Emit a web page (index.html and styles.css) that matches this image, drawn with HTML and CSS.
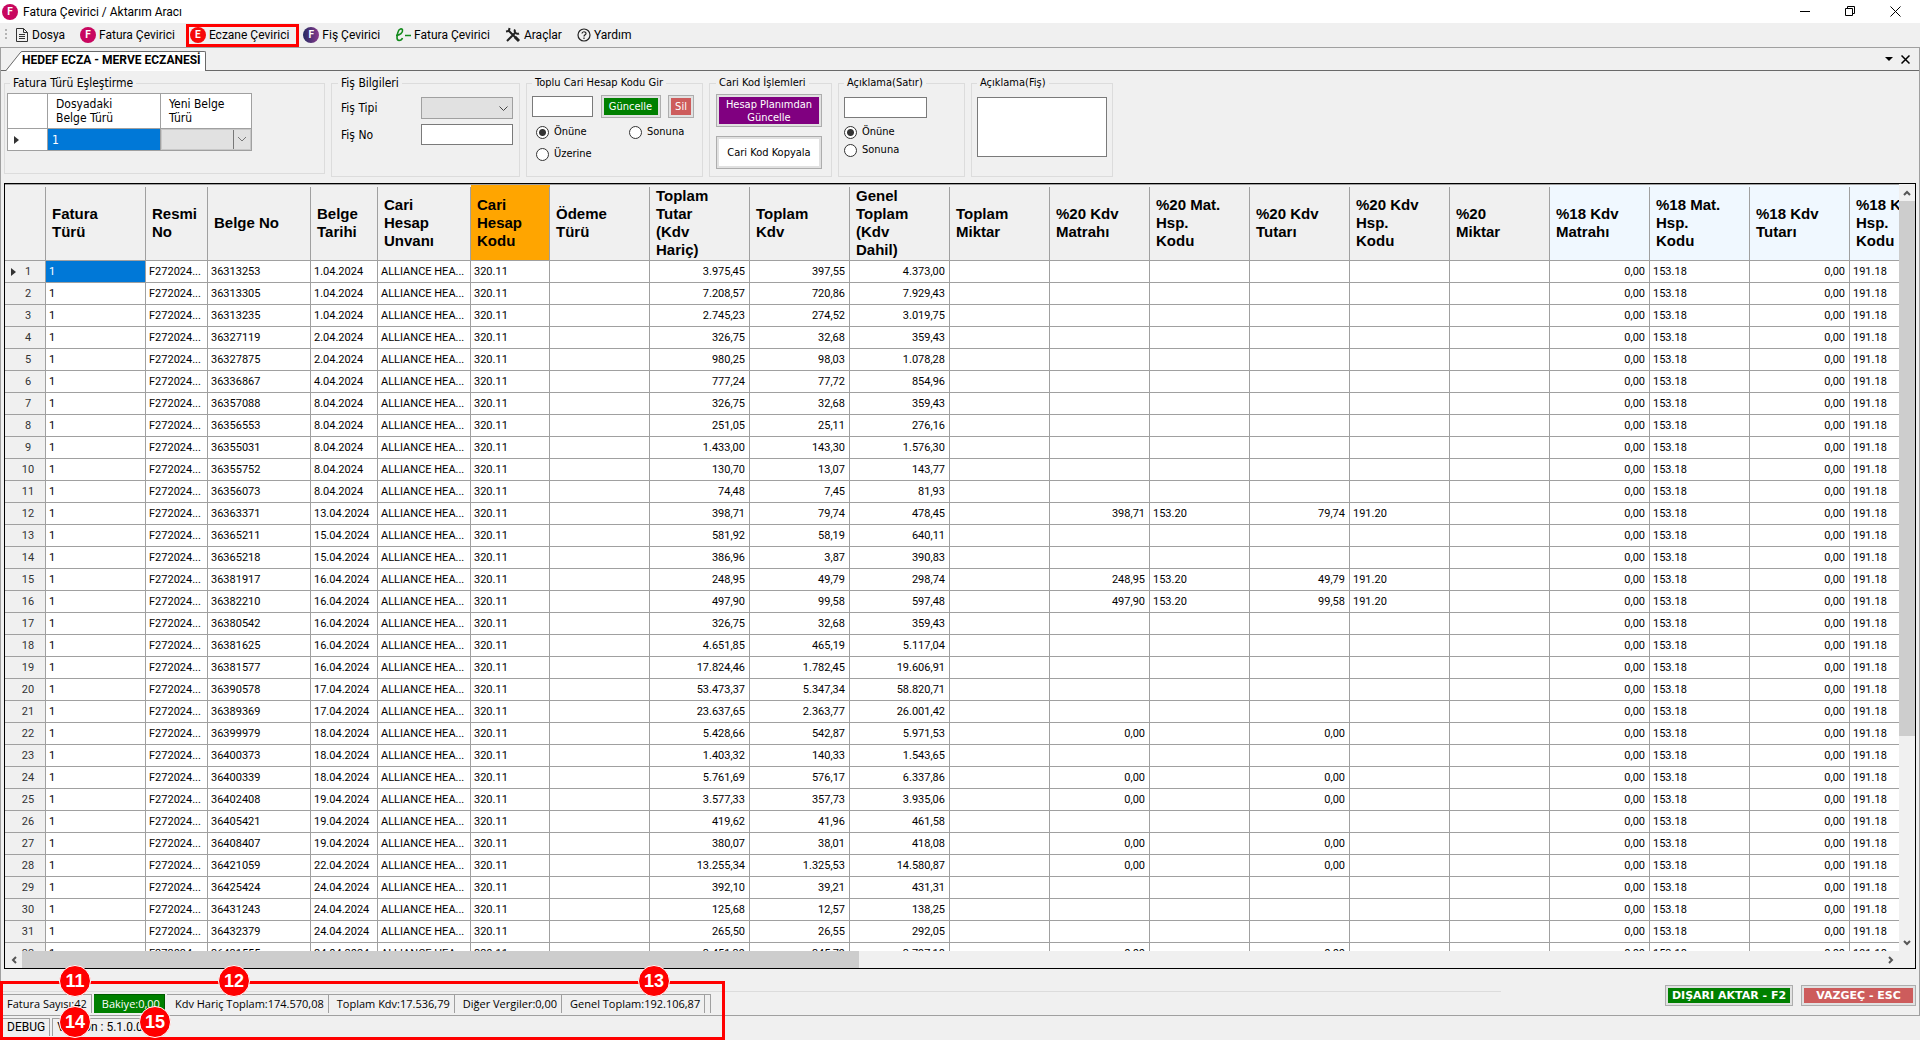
FILE: index.html
```html
<!DOCTYPE html>
<html lang="tr">

<head>
    <meta charset="UTF-8">
    <meta name="viewport" content="width=device-width, initial-scale=1.0">
    <title>Fatura Çevirici / Aktarım Aracı</title>
    <link rel="stylesheet" href="styles.css">
</head>

<body>
    <header class="titlebar">
        <span class="badge-icon pink">F</span>
        <span class="title">Fatura Çevirici / Aktarım Aracı</span>
        <div class="window-buttons">
            <button aria-label="Küçült"><svg width="11" height="11"><path d="M0 5.5h10" /></svg></button>
            <button aria-label="Geri yükle"><svg width="11" height="11"><path d="M.5 2.5h7v7h-7zM2.5 2.5v-2h7v7h-2" /></svg></button>
            <button aria-label="Kapat"><svg width="11" height="11"><path d="M.5.5l10 10M10.5.5l-10 10" /></svg></button>
        </div>
    </header>

    <nav class="menu">
        <span class="grip"></span>
        <button>
            <svg width="14" height="16" viewBox="0 0 14 16" fill="none" stroke="#333"><path d="M1.5 1.5h7l4 4v9h-11zM8.5 1.5v4h4M4 7.5h6M4 9.5h6M4 11.5h6" /></svg>
            Dosya
        </button>
        <button><span class="badge-icon pink">F</span>Fatura Çevirici</button>
        <button class="marked"><span class="badge-icon red">E</span>Eczane Çevirici</button>
        <button><span class="badge-icon navy">F</span>Fiş Çevirici</button>
        <button>
            <svg width="16" height="16" viewBox="0 0 16 16" fill="none" stroke="#138a1c" stroke-width="1.6"><path d="M1 8.500C5 8.500 8 5.500 7.500 3C7 1 4 1.500 3 5C1.500 9.500 1.500 13.500 4 13.500C5.500 13.500 7 12.500 7.500 11M10 8.500h6" /></svg>
            Fatura Çevirici
        </button>
        <button>
            <svg width="16" height="16" viewBox="0 0 16 16" fill="none" stroke="#222" stroke-width="2"><path d="M3 3l10 10M2 14l8-8" /><path d="M1 4.500l3-.5.5-3M10 2.500a3 3 0 0 0 4 4" /><path d="M10 10l4 4" stroke-width="3" /></svg>
            Araçlar
        </button>
        <button>
            <svg width="14" height="14" viewBox="0 0 14 14" fill="none" stroke="#222" stroke-width="1.2"><circle cx="7" cy="7" r="6" /><path d="M5 5.600C5 3.200 9 3.200 9 5.400C9 6.800 7 6.700 7 8.500M7 9.600v1.300" /></svg>
            Yardım
        </button>
    </nav>

    <main class="document">
        <div class="tabs">
            <div class="tab">
                <svg width="16" height="20" viewBox="0 0 16 20"><path d="M0 20L14 2Q15 .5 16 .5V20z" fill="#fff" /><path d="M0 19.500L14 2Q15 .5 16 .5" fill="none" stroke="#696969" /></svg>
                <span class="tab-label">HEDEF ECZA - MERVE ECZANESİ</span>
            </div>
            <div class="tab-buttons">
                <button aria-label="Sekmeler"><svg width="8" height="4"><path d="M0 0h8L4 4z" fill="#000" /></svg></button>
                <button aria-label="Sekmeyi kapat"><svg width="9" height="9"><path d="M.5.5l8 8M8.500.5l-8 8" stroke="#000" stroke-width="1.500" /></svg></button>
            </div>
        </div>

        <div class="groups">
            <fieldset class="group group-types">
                <legend>Fatura Türü Eşleştirme</legend>
                <table class="type-table">
                    <colgroup>
                        <col class="col-mark">
                        <col class="col-old">
                        <col class="col-new">
                    </colgroup>
                    <thead>
                        <tr>
                            <th></th>
                            <th>Dosyadaki<br>Belge Türü</th>
                            <th>Yeni Belge<br>Türü</th>
                        </tr>
                    </thead>
                    <tbody>
                        <tr>
                            <td><span class="arrow"></span></td>
                            <td class="selected">1</td>
                            <td><select aria-label="Yeni Belge Türü"></select></td>
                        </tr>
                    </tbody>
                </table>
            </fieldset>

            <fieldset class="group group-slip">
                <legend>Fiş Bilgileri</legend>
                <div class="field">
                    <label for="slipType">Fiş Tipi</label>
                    <select id="slipType"></select>
                </div>
                <div class="field">
                    <label for="slipNo">Fiş No</label>
                    <input type="text" id="slipNo">
                </div>
            </fieldset>

            <fieldset class="group group-bulk small">
                <legend>Toplu Cari Hesap Kodu Gir</legend>
                <div class="row">
                    <input type="text" aria-label="Cari Hesap Kodu">
                    <button class="btn green">Güncelle</button>
                    <button class="btn rose">Sil</button>
                </div>
                <div class="radios">
                    <label><input type="radio" name="bulk" checked>Önüne</label>
                    <label><input type="radio" name="bulk">Sonuna</label>
                    <label><input type="radio" name="bulk">Üzerine</label>
                </div>
            </fieldset>

            <fieldset class="group group-codes small">
                <legend>Cari Kod İşlemleri</legend>
                <button class="btn purple">Hesap Planımdan Güncelle</button>
                <button class="btn white">Cari Kod Kopyala</button>
            </fieldset>

            <fieldset class="group group-line small">
                <legend>Açıklama(Satır)</legend>
                <input type="text" aria-label="Açıklama(Satır)">
                <label><input type="radio" name="line" checked>Önüne</label>
                <label><input type="radio" name="line">Sonuna</label>
            </fieldset>

            <fieldset class="group group-note small">
                <legend>Açıklama(Fiş)</legend>
                <textarea aria-label="Açıklama(Fiş)"></textarea>
            </fieldset>
        </div>

        <div class="grid">
            <div class="grid-view">
                <table class="invoices">
                    <colgroup id="cols"></colgroup>
                    <thead>
                        <tr id="head"></tr>
                    </thead>
                    <tbody id="rows"></tbody>
                </table>
            </div>
            <div class="scroll scroll-y">
                <button aria-label="Yukarı"><svg width="8" height="6"><path d="M1 5l3-3 3 3" /></svg></button>
                <div class="track"><div class="thumb"></div></div>
                <button aria-label="Aşağı"><svg width="8" height="6"><path d="M1 1l3 3 3-3" /></svg></button>
            </div>
            <div class="scroll scroll-x">
                <button aria-label="Sola"><svg width="6" height="8"><path d="M5 1L2 4l3 3" /></svg></button>
                <div class="track"><div class="thumb"></div></div>
                <button aria-label="Sağa"><svg width="6" height="8"><path d="M1 1l3 3-3 3" /></svg></button>
            </div>
        </div>

        <div class="footer">
            <div class="totals">
                <span class="total">Fatura Sayısı:42</span>
                <span class="total balance">Bakiye:0,00</span>
                <span class="total">Kdv Hariç Toplam:174.570,08</span>
                <span class="total">Toplam Kdv:17.536,79</span>
                <span class="total">Diğer Vergiler:0,00</span>
                <span class="total">Genel Toplam:192.106,87</span>
                <span class="total empty"></span>
            </div>
            <div class="actions">
                <button class="btn green">DIŞARI AKTAR - F2</button>
                <button class="btn rose">VAZGEÇ - ESC</button>
            </div>
        </div>
    </main>

    <footer class="statusbar">
        <span>DEBUG</span>
        <span>Version : 5.1.0.0</span>
    </footer>

    <div class="callout">
        <span class="pin p11">11</span>
        <span class="pin p12">12</span>
        <span class="pin p13">13</span>
        <span class="pin p14">14</span>
        <span class="pin p15">15</span>
    </div>

    <script>
        // title, width, extra class, numeric
        const columns = [
            ['', 41, '', false],
            ['Fatura<br>Türü', 100, '', false],
            ['Resmi<br>No', 62, '', false],
            ['Belge No', 103, '', false],
            ['Belge<br>Tarihi', 67, '', false],
            ['Cari<br>Hesap<br>Unvanı', 93, '', false],
            ['Cari<br>Hesap<br>Kodu', 79, 'orange', false],
            ['Ödeme<br>Türü', 100, '', false],
            ['Toplam<br>Tutar<br>(Kdv<br>Hariç)', 100, '', true],
            ['Toplam<br>Kdv', 100, '', true],
            ['Genel<br>Toplam<br>(Kdv<br>Dahil)', 100, '', true],
            ['Toplam<br>Miktar', 100, '', true],
            ['%20 Kdv<br>Matrahı', 100, '', true],
            ['%20 Mat.<br>Hsp.<br>Kodu', 100, '', false],
            ['%20 Kdv<br>Tutarı', 100, '', true],
            ['%20 Kdv<br>Hsp.<br>Kodu', 100, '', false],
            ['%20<br>Miktar', 100, '', true],
            ['%18 Kdv<br>Matrahı', 100, 'blue', true],
            ['%18 Mat.<br>Hsp.<br>Kodu', 100, 'blue', false],
            ['%18 Kdv<br>Tutarı', 100, 'blue', true],
            ['%18 Kdv<br>Hsp.<br>Kodu', 100, 'blue', false]
        ];

        // belge no, tarih, kdv hariç, kdv, genel toplam, %20 matrah, %20 kdv
        const invoices = [
            ['36313253', '1.04.2024', '3.975,45', '397,55', '4.373,00'],
            ['36313305', '1.04.2024', '7.208,57', '720,86', '7.929,43'],
            ['36313235', '1.04.2024', '2.745,23', '274,52', '3.019,75'],
            ['36327119', '2.04.2024', '326,75', '32,68', '359,43'],
            ['36327875', '2.04.2024', '980,25', '98,03', '1.078,28'],
            ['36336867', '4.04.2024', '777,24', '77,72', '854,96'],
            ['36357088', '8.04.2024', '326,75', '32,68', '359,43'],
            ['36356553', '8.04.2024', '251,05', '25,11', '276,16'],
            ['36355031', '8.04.2024', '1.433,00', '143,30', '1.576,30'],
            ['36355752', '8.04.2024', '130,70', '13,07', '143,77'],
            ['36356073', '8.04.2024', '74,48', '7,45', '81,93'],
            ['36363371', '13.04.2024', '398,71', '79,74', '478,45', '398,71', '79,74'],
            ['36365211', '15.04.2024', '581,92', '58,19', '640,11'],
            ['36365218', '15.04.2024', '386,96', '3,87', '390,83'],
            ['36381917', '16.04.2024', '248,95', '49,79', '298,74', '248,95', '49,79'],
            ['36382210', '16.04.2024', '497,90', '99,58', '597,48', '497,90', '99,58'],
            ['36380542', '16.04.2024', '326,75', '32,68', '359,43'],
            ['36381625', '16.04.2024', '4.651,85', '465,19', '5.117,04'],
            ['36381577', '16.04.2024', '17.824,46', '1.782,45', '19.606,91'],
            ['36390578', '17.04.2024', '53.473,37', '5.347,34', '58.820,71'],
            ['36389369', '17.04.2024', '23.637,65', '2.363,77', '26.001,42'],
            ['36399979', '18.04.2024', '5.428,66', '542,87', '5.971,53', '0,00', '0,00'],
            ['36400373', '18.04.2024', '1.403,32', '140,33', '1.543,65'],
            ['36400339', '18.04.2024', '5.761,69', '576,17', '6.337,86', '0,00', '0,00'],
            ['36402408', '19.04.2024', '3.577,33', '357,73', '3.935,06', '0,00', '0,00'],
            ['36405421', '19.04.2024', '419,62', '41,96', '461,58'],
            ['36408407', '19.04.2024', '380,07', '38,01', '418,08', '0,00', '0,00'],
            ['36421059', '22.04.2024', '13.255,34', '1.325,53', '14.580,87', '0,00', '0,00'],
            ['36425424', '24.04.2024', '392,10', '39,21', '431,31'],
            ['36431243', '24.04.2024', '125,68', '12,57', '138,25'],
            ['36432379', '24.04.2024', '265,50', '26,55', '292,05'],
            ['36431555', '24.04.2024', '3.451,39', '345,79', '3.797,18', '0,00', '0,00']
        ];

        columns.forEach(([title, width, cls]) => {
            document.getElementById('cols').insertAdjacentHTML('beforeend', `<col style="width: ${width}px">`);
            document.getElementById('head').insertAdjacentHTML('beforeend', `<th class="${cls}">${title}</th>`);
        });

        invoices.forEach(([no, date, net, vat, total, base20 = '', vat20 = ''], i) => {
            const hasCode = base20 && base20 !== '0,00';
            const cells = ['1', 'F272024...', no, date, 'ALLIANCE HEA...', '320.11', '', net, vat, total, '',
                base20, hasCode ? '153.20' : '', vat20, hasCode ? '191.20' : '', '', '0,00', '153.18', '0,00', '191.18'];
            const tds = cells.map((text, c) => {
                const cls = i === 0 && c === 0 ? 'selected' : columns[c + 1][3] ? 'num' : '';
                return `<td class="${cls}">${text}</td>`;
            }).join('');
            const arrow = i === 0 ? '<span class="arrow"></span>' : '';
            document.getElementById('rows').insertAdjacentHTML('beforeend', `<tr><th>${arrow}${i + 1}</th>${tds}</tr>`);
        });
    </script>
</body>

</html>
```
FILE: styles.css
```css
* {
    box-sizing: border-box;
}

html, body {
    height: 100%;
    margin: 0;
    padding: 0;
}

body {
    display: flex;
    flex-direction: column;
    position: relative;
    overflow: hidden;
    background-color: #f0f0f0;
    color: #000;
    font-family: Roboto, "Open Sans", sans-serif;
    font-size: 12px;
    line-height: 16px;
}

button, input, select, textarea {
    font: inherit;
    color: inherit;
    margin: 0;
    padding: 0;
    border: none;
    border-radius: 0;
    background: none;
}

/* Title bar */
.titlebar {
    display: flex;
    align-items: center;
    height: 23px;
    padding-left: 2px;
    background-color: #fff;
}

.title {
    margin-left: 5px;
}

.window-buttons {
    display: flex;
    margin-left: auto;
    padding-right: 2px;
}

.window-buttons button {
    width: 45px;
    height: 20px;
}

.window-buttons svg {
    display: block;
    margin: 0 auto;
    fill: none;
    stroke: #000;
}

.badge-icon {
    display: inline-flex;
    align-items: center;
    justify-content: center;
    width: 16px;
    height: 16px;
    border-radius: 50%;
    color: #fff;
    font-size: 10px;
    font-weight: bold;
}

.pink {
    background-color: #c8075f;
}

.red {
    background-color: #f60808;
}

.navy {
    background: linear-gradient(90deg, #232a63, #8a3a8c);
}

/* Menu */
.menu {
    display: flex;
    align-items: center;
    height: 24px;
    padding-left: 5px;
}

.grip {
    width: 2px;
    height: 12px;
    margin-right: 4px;
    background: repeating-linear-gradient(#b4b4b4 0 2px, transparent 2px 4px);
}

.menu button {
    display: flex;
    align-items: center;
    gap: 3px;
    height: 23px;
    padding: 0 7px 0 4px;
    margin-right: 4px;
}

.menu .marked {
    outline: 3px solid #ff0000;
    outline-offset: -3px;
    padding-right: 10px;
    margin-right: 0;
}

/* Document frame */
.document {
    flex: 1;
    display: flex;
    flex-direction: column;
    min-height: 0;
    border: 1px solid #a0a0a0;
}

.tabs {
    display: flex;
    align-items: flex-end;
    height: 23px;
    padding-left: 5px;
    border-bottom: 1px solid #696969;
}

.tab {
    display: flex;
    height: 20px;
    margin-bottom: -1px;
}

.tab-label {
    padding-right: 4px;
    border-top: 1px solid #696969;
    border-right: 1px solid #696969;
    border-top-right-radius: 2px;
    background-color: #fff;
    font-weight: bold;
}

.tab-buttons {
    display: flex;
    align-items: center;
    align-self: center;
    gap: 8px;
    margin-left: auto;
    padding-right: 9px;
}

.tab-buttons svg {
    display: block;
}

/* Group boxes */
.groups {
    display: flex;
    align-items: flex-start;
    gap: 6px;
    padding: 4px 3px 6px;
    font-family: "DejaVu Sans Condensed", "DejaVu Sans", sans-serif;
}

.group {
    min-width: 0;
    height: 102px;
    margin: 0;
    padding: 0 6px;
    border: 1px solid #dcdcdc;
}

.group legend {
    padding: 0 3px;
    font-size: 12px;
}

.small, .group.small legend {
    font-size: 11px;
}

.group input[type="text"], .group textarea {
    display: block;
    height: 21px;
    border: 1px solid #7a7a7a;
    background-color: #fff;
}

.group label {
    display: flex;
    align-items: center;
}

.group select {
    appearance: none;
    display: block;
    height: 22px;
    border: 1px solid #a0a0a0;
    background: #e1e1e1 url("data:image/svg+xml,%3Csvg xmlns='http://www.w3.org/2000/svg' width='9' height='5'%3E%3Cpath d='M.5.5l4 4 4-4' fill='none' stroke='%23444'/%3E%3C/svg%3E") no-repeat right 4px center;
}

.group input[type="radio"] {
    appearance: none;
    width: 13px;
    height: 13px;
    margin-right: 5px;
    border: 1px solid #333;
    border-radius: 50%;
    background-color: #fff;
}

.group input[type="radio"]:checked {
    background: radial-gradient(circle, #333 0 3px, #fff 4px);
}

.group-types {
    width: 321px;
    height: 99px;
    padding: 2px 2px 0;
}

.group-types legend {
    margin-left: 3px;
}

.type-table {
    width: 245px;
    table-layout: fixed;
    border-collapse: collapse;
    background-color: #fff;
    line-height: 14px;
}

.col-mark {
    width: 40px;
}

.col-old {
    width: 113px;
}

.type-table th, .type-table td {
    height: 22px;
    padding: 0;
    border: 1px solid #a0a0a0;
    text-align: left;
    font-weight: normal;
}

.type-table th {
    height: 35px;
    padding-left: 8px;
}

.type-table .selected {
    padding-left: 4px;
}

.group .type-table select {
    width: 100%;
    height: 21px;
    border: 1px solid #c8c8c8;
    background-image: url("data:image/svg+xml,%3Csvg xmlns='http://www.w3.org/2000/svg' width='17' height='21'%3E%3Cpath d='M.5 0v21M5 8l4 4 4-4' fill='none' stroke='%23777'/%3E%3C/svg%3E");
    background-position: right center;
}

.arrow {
    display: inline-block;
    border: 4px solid transparent;
    border-left: 5px solid #333;
    border-right: none;
}

.type-table .arrow {
    margin-left: 6px;
    vertical-align: middle;
}

.selected {
    background-color: #0078d7;
    color: #fff;
}

.group-slip {
    width: 189px;
    padding-top: 6px;
}

.field {
    display: flex;
    align-items: center;
    justify-content: space-between;
    padding-left: 3px;
    margin-bottom: 5px;
}

.field input, .field select {
    width: 92px;
}

.group-bulk {
    width: 177px;
    padding: 4px 8px 0 5px;
}

.row {
    display: flex;
    align-items: center;
    justify-content: space-between;
}

.row input {
    width: 61px;
}

.row .green {
    width: 60px;
    height: 23px;
}

.row .rose {
    width: 26px;
    height: 23px;
}

.radios {
    display: grid;
    grid-template-columns: 93px 1fr;
    row-gap: 6px;
    padding: 6px 0 0 4px;
}

.group-codes {
    display: flex;
    flex-direction: column;
    gap: 9px;
    width: 123px;
    padding: 3px 8px 0 6px;
}

.group-line {
    width: 127px;
    padding: 6px 5px 0;
}

.group-line input[type="text"] {
    width: 83px;
    margin-bottom: 5px;
}

.group-line label {
    height: 18px;
}

.group-note {
    width: 142px;
    padding: 6px 5px 0;
}

.group-note textarea {
    width: 130px;
    min-height: 60px;
    resize: none;
}

.btn {
    border: 1px solid #adadad;
    box-shadow: inset 0 0 0 2px #e1e1e1;
    color: #fff;
    line-height: 13px;
    text-align: center;
}

.group-codes .btn {
    width: 106px;
    height: 33px;
}

.green {
    background-color: #008000;
}

.rose {
    background-color: #cd5c5c;
}

.purple {
    background-color: #800080;
}

.white {
    background-color: #fff;
    color: #000;
}

/* Invoice grid */
.grid {
    flex: 1;
    display: grid;
    grid-template-columns: minmax(0, 1fr) 16px;
    grid-template-rows: minmax(0, 1fr) 17px;
    min-height: 0;
    margin: 0 3px;
    border: 1px solid #000;
}

.grid-view {
    overflow: hidden;
    border-top: 1px solid #a0a0a0;
    background-color: #fff;
}

.invoices {
    width: 1945px;
    table-layout: fixed;
    border-collapse: separate;
    border-spacing: 0;
    font-size: 11px;
}

.invoices thead th {
    height: 76px;
    padding: 0 0 0 6px;
    border-bottom: 1px solid #a0a0a0;
    background: linear-gradient(#a0a0a0, #a0a0a0) no-repeat right 2px / 1px 73px #f0f0f0;
    font-family: "Liberation Sans", Arial, sans-serif;
    font-size: 15px;
    line-height: 18px;
    text-align: left;
}

.invoices thead .orange {
    background-color: #ffa500;
}

.invoices thead .blue {
    background-color: #f0f8ff;
}

.invoices tbody th, .invoices td {
    height: 22px;
    padding: 0 4px 0 3px;
    border-right: 1px solid #a0a0a0;
    border-bottom: 1px solid #a0a0a0;
    line-height: 16px;
    white-space: nowrap;
    overflow: hidden;
}

.invoices tbody th {
    position: relative;
    padding-left: 10px;
    background-color: #f0f0f0;
    color: #333;
    font-weight: normal;
    text-align: center;
}

.invoices .arrow {
    position: absolute;
    left: 6px;
    top: 7px;
}

.invoices .num {
    text-align: right;
}

/* Scroll bars */
.scroll {
    display: flex;
    background-color: #f0f0f0;
}

.scroll-y {
    flex-direction: column;
}

.scroll button {
    flex: 0 0 17px;
    display: flex;
    align-items: center;
    justify-content: center;
}

.scroll svg {
    fill: none;
    stroke: #555;
    stroke-width: 2;
}

.track {
    flex: 1;
}

.thumb {
    background-color: #cdcdcd;
}

.scroll-y .thumb {
    height: 73%;
}

.scroll-x .thumb {
    width: 45%;
    height: 100%;
}

/* Footer */
.footer {
    display: flex;
    align-items: flex-start;
    justify-content: space-between;
    height: 46px;
    padding: 16px 3px 0 0;
}

.totals {
    display: flex;
    align-items: center;
    width: 1500px;
    margin-top: 6px;
    padding-top: 2px;
    border-top: 1px solid #dcdcdc;
    font-family: "Open Sans", "Noto Sans", sans-serif;
    font-size: 11px;
}

.total {
    height: 19px;
    padding: 0 4px 0 8px;
    border-top: 1px solid #a0a0a0;
    border-right: 1px solid #a0a0a0;
    line-height: 17px;
}

.total:first-child {
    padding-left: 6px;
}

.balance {
    margin: 0 2px;
    border-color: #005a00;
    background-color: #008000;
    color: #fff;
}

.empty {
    width: 6px;
    padding: 0;
}

.actions {
    display: flex;
    gap: 8px;
    font-family: "DejaVu Sans", sans-serif;
    font-size: 11px;
    font-weight: bold;
}

.actions .btn {
    width: 128px;
    height: 21px;
}

.actions .rose {
    width: 115px;
}

.statusbar {
    display: flex;
    gap: 2px;
    height: 24px;
    padding: 2px 0 4px 3px;
}

.statusbar span {
    padding: 0 4px;
    border-top: 1px solid #a0a0a0;
    border-right: 1px solid #a0a0a0;
}

.statusbar span + span {
    border-left: 1px solid #a0a0a0;
    border-right: none;
}

/* Numbered callout over the totals */
.callout {
    position: absolute;
    left: 0;
    bottom: 0;
    width: 725px;
    height: 59px;
    border: 3px solid #ff0000;
}

.pin {
    position: absolute;
    width: 32px;
    height: 32px;
    border: 1px solid #fff;
    border-radius: 50%;
    background-color: #ff0000;
    color: #fff;
    font-family: "Liberation Sans", Arial, sans-serif;
    font-size: 18px;
    font-weight: bold;
    line-height: 30px;
    text-align: center;
}

.p11 {
    left: 56px;
    top: -19px;
}

.p12 {
    left: 215px;
    top: -19px;
}

.p13 {
    left: 635px;
    top: -19px;
}

.p14 {
    left: 56px;
    top: 22px;
}

.p15 {
    left: 136px;
    top: 22px;
}
```
